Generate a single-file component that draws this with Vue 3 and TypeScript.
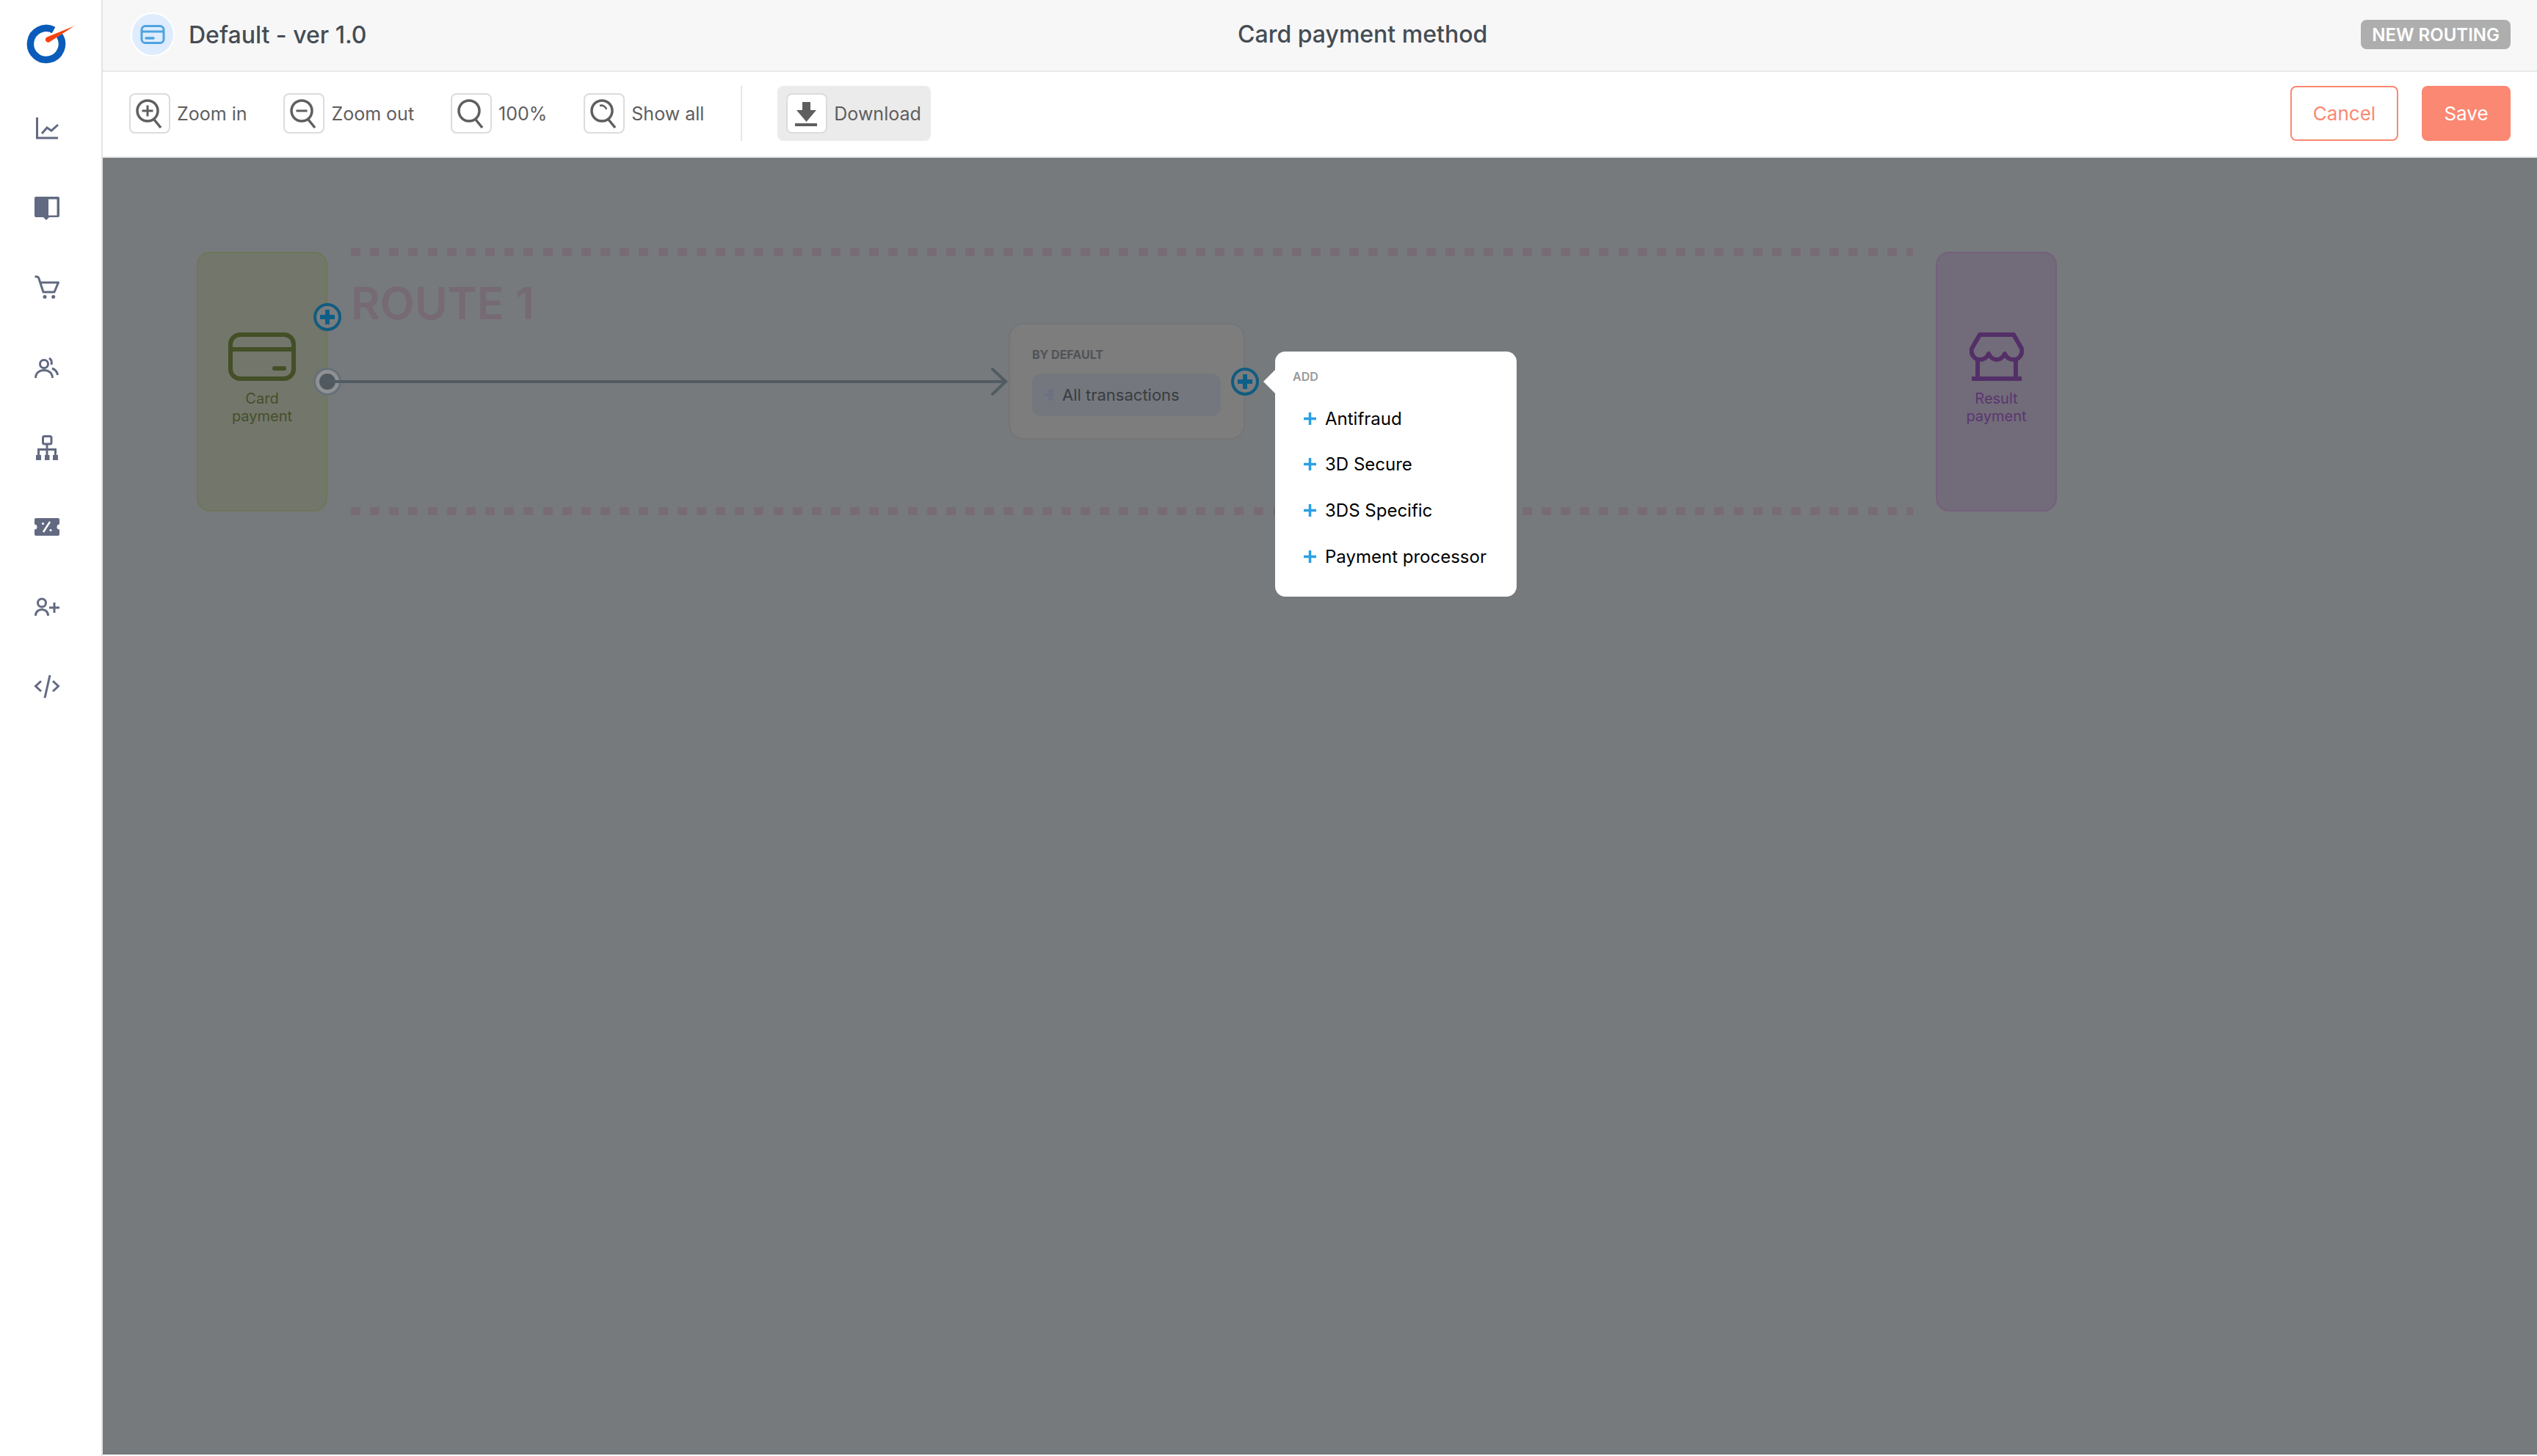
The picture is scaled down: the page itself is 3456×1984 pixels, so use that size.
<script setup lang="ts">
interface ToolItem {
  label: string;
  kind: "in" | "out" | "fit" | "all";
}

const tools: ToolItem[] = [
  { label: "Zoom in", kind: "in" },
  { label: "Zoom out", kind: "out" },
  { label: "100%", kind: "fit" },
  { label: "Show all", kind: "all" },
];

const addItems: string[] = ["Antifraud", "3D Secure", "3DS Specific", "Payment processor"];
</script>

<template>
  <div class="app">
    <aside class="sidebar">
      <div class="logo">
        <svg width="72" height="60" viewBox="0 0 72 60">
          <path d="M47 20.300 A21.500 21.500 0 1 1 39.100 13" fill="none" stroke="#0b5cba" stroke-width="9.500" />
          <path d="M67 7.500 L33 29.500 Q29 30.500 28 27 Q27.500 24 30 22.500 Z" fill="#f8420e" />
        </svg>
      </div>
      <nav class="nav">
        <div class="nav-row">
          <svg class="nav-icon" viewBox="0 0 36 36" fill="none" stroke="#626a82" stroke-width="3">
            <path d="M4.500 3 V31 H33" />
            <path d="M11 25 L18 17 L24 21 L33 13" />
          </svg>
        </div>
        <div class="nav-row">
          <svg class="nav-icon" viewBox="0 0 36 36">
            <rect x="1" y="2" width="34" height="28" rx="2" fill="#626a82" />
            <rect x="20" y="5.500" width="11.500" height="22" fill="#fff" />
            <path d="M13 30 L17 34 L21 30 Z" fill="#626a82" />
          </svg>
        </div>
        <div class="nav-row">
          <svg class="nav-icon" viewBox="0 0 36 36" fill="none" stroke="#626a82" stroke-width="3">
            <path d="M1.500 3 H4 Q6 3 6.800 5 L13 24 H28 L33.500 11 H8.500" stroke-linejoin="round" />
            <circle cx="15" cy="30.500" r="2.500" fill="#626a82" stroke="none" />
            <circle cx="26.700" cy="30.500" r="2.500" fill="#626a82" stroke="none" />
          </svg>
        </div>
        <div class="nav-row">
          <svg class="nav-icon" viewBox="0 0 36 36" fill="none" stroke="#626a82" stroke-width="3">
            <circle cx="14" cy="13" r="5.500" />
            <path d="M2.500 32 C2.500 25 8 21.500 14 21.500 C20 21.500 25.500 25 25.500 32" />
            <path d="M21 5 C24 7 25 10 24 14" />
            <path d="M25 19 C29 20.500 32 24 32.500 28" />
          </svg>
        </div>
        <div class="nav-row">
          <svg class="nav-icon" viewBox="0 0 36 36" fill="none" stroke="#626a82" stroke-width="3">
            <rect x="12.500" y="2.500" width="11.500" height="10.500" rx="2" />
            <path d="M18 13 V29 M6.500 29 V20.500 H29.500 V29" />
            <rect x="3" y="28" width="7" height="7" fill="#626a82" stroke="none" />
            <rect x="15" y="28" width="6.500" height="7" fill="#626a82" stroke="none" />
            <rect x="26" y="28" width="7" height="7" fill="#626a82" stroke="none" />
          </svg>
        </div>
        <div class="nav-row">
          <svg class="nav-icon" viewBox="0 0 36 36">
            <path d="M3 6 H33 Q35 6 35 8 V14.500 A3.500 3.500 0 0 0 35 21.500 V28 Q35 30 33 30 H3 Q1 30 1 28 V21.500 A3.500 3.500 0 0 0 1 14.500 V8 Q1 6 3 6 Z" fill="#626a82" />
            <path d="M13 25 L22 11" stroke="#fff" stroke-width="2.500" />
            <circle cx="12.500" cy="13.500" r="1.600" fill="#fff" />
            <circle cx="23" cy="22.500" r="1.600" fill="#fff" />
          </svg>
        </div>
        <div class="nav-row">
          <svg class="nav-icon" viewBox="0 0 36 36" fill="none" stroke="#626a82" stroke-width="3">
            <circle cx="11" cy="12.500" r="5.500" />
            <path d="M2.500 30 C2.500 24.500 6.500 21.500 11 21.500 C15.500 21.500 19.500 24.500 19.500 30" />
            <path d="M21 19 H35 M28 12 V26" />
          </svg>
        </div>
        <div class="nav-row">
          <svg class="nav-icon" viewBox="0 0 36 36" fill="none" stroke="#626a82" stroke-width="3">
            <path d="M10 11 L2.500 18 L10 25" />
            <path d="M26 11 L33.500 18 L26 25" />
            <path d="M22 3 L15 34" />
          </svg>
        </div>
      </nav>
    </aside>

    <main class="main">
      <header class="topbar">
        <div class="topbar-left">
          <span class="title-badge">
            <svg width="34" height="26" viewBox="0 0 34 26" fill="none" stroke="#4fa3e0" stroke-width="3">
              <rect x="2" y="1.500" width="30" height="23" rx="5" />
              <path d="M2 9 H32" />
              <path d="M8 18 H18" stroke-linecap="round" stroke-width="3.500" />
            </svg>
          </span>
          <span class="title">Default - ver 1.0</span>
        </div>
        <div class="topbar-center">Card payment method</div>
        <span class="tag">NEW ROUTING</span>
      </header>

      <div class="toolbar">
        <div v-for="tool in tools" :key="tool.kind" class="tool">
          <span class="tool-box">
            <svg width="56" height="55" viewBox="0 0 56 55" fill="none" stroke="#5f5f5f" stroke-width="3.500">
              <circle cx="25" cy="24" r="14" />
              <path d="M34 36 L43 47" />
              <path v-if="tool.kind === 'in'" d="M25 16.500 V31.500 M17.500 24 H32.500" stroke-width="3" />
              <path v-if="tool.kind === 'out'" d="M17.500 24 H32.500" stroke-width="3" />
              <path v-if="tool.kind === 'all'" d="M22 17 A7 7 0 0 1 31 22" stroke-width="2.500" />
            </svg>
          </span>
          <span class="tool-label">{{ tool.label }}</span>
        </div>
        <span class="divider" />
        <div class="tool tool-active">
          <span class="tool-box">
            <svg width="56" height="55" viewBox="0 0 56 55" fill="#5f5f5f">
              <path d="M22 12 H33 V23 H41 L27.500 39 L14 23 H22 Z" />
              <rect x="12" y="41" width="30" height="4" />
            </svg>
          </span>
          <span class="tool-label">Download</span>
        </div>
        <div class="actions">
          <button class="btn btn-outline" type="button">Cancel</button>
          <button class="btn btn-solid" type="button">Save</button>
        </div>
      </div>

      <section class="canvas">
        <div class="dots dots-top" />
        <div class="dots dots-bottom" />
        <div class="route-title">ROUTE 1</div>

        <div class="node node-start">
          <svg width="92" height="66" viewBox="0 0 92 66" fill="none" stroke="#434f27" stroke-width="6">
            <rect x="3" y="3" width="86" height="60" rx="13" />
            <path d="M3 23 H89" />
            <path d="M63 49 H76" stroke-linecap="round" />
          </svg>
          <span class="node-text">Card<br />payment</span>
        </div>

        <div class="node node-end">
          <svg width="74" height="66" viewBox="0 0 74 66" fill="none" stroke="#532f68" stroke-width="6">
            <path d="M14 3 H60 L71 22 C73 30 67 37 60 37 C54 37 50 34 48 29 C45 35 41 37 37 37 C33 37 29 35 26 29 C24 34 20 37 14 37 C7 37 1 30 3 22 Z" stroke-linejoin="round" />
            <path d="M11 37 V63 M63 37 V63" />
            <path d="M3 63 H71" />
          </svg>
          <span class="node-text">Result<br />payment</span>
        </div>

        <div class="filter-node">
          <div class="filter-label">BY DEFAULT</div>
          <div class="filter-pill">
            <svg width="16" height="16" viewBox="0 0 16 16" fill="none" stroke="#666c85" stroke-width="1">
              <circle cx="2.500" cy="8" r="1.500" />
              <rect x="9" y="1" width="3.500" height="3" />
              <rect x="9" y="6.500" width="3.500" height="3" />
              <rect x="9" y="12" width="3.500" height="3" />
              <path d="M4 8 H9 M7 2.500 V13.500 H9 M7 2.500 H9" />
            </svg>
            <span>All transactions</span>
          </div>
        </div>

        <span class="plus plus-start">
          <svg width="20" height="20" viewBox="0 0 20 20"><path d="M10 0 V20 M0 10 H20" stroke="#0d5f88" stroke-width="6" /></svg>
        </span>
        <span class="plus plus-filter">
          <svg width="20" height="20" viewBox="0 0 20 20"><path d="M10 0 V20 M0 10 H20" stroke="#0d5f88" stroke-width="6" /></svg>
        </span>
        <span class="port"><span class="port-dot" /></span>

        <div class="wire" />
        <svg class="wire-head" width="24" height="40" viewBox="0 0 24 40" fill="none" stroke="#515c62" stroke-width="4" stroke-linecap="round">
          <path d="M3 3 L21 20 L3 37" />
        </svg>

        <div class="add-menu">
          <div class="add-title">ADD</div>
          <div v-for="item in addItems" :key="item" class="add-item">
            <svg width="17" height="17" viewBox="0 0 17 17"><path d="M8.500 0 V17 M0 8.500 H17" stroke="#2b9fe3" stroke-width="3.500" /></svg>
            <span>{{ item }}</span>
          </div>
        </div>
      </section>
    </main>
  </div>
</template>

<style scoped>
.app {
  display: flex;
  width: 3456px;
  height: 1984px;
  background: #fff;
  font-family: Inter, "Liberation Sans", sans-serif;
  overflow: hidden;
}

.sidebar {
  flex: 0 0 140px;
  box-sizing: border-box;
  border-right: 2px solid #e4e4e4;
  background: #fff;
}

.logo {
  height: 121px;
  padding: 28px 0 0 34px;
  box-sizing: border-box;
}

.logo svg {
  display: block;
}

.nav-row {
  display: flex;
  align-items: center;
  height: 108.600px;
  padding-left: 46px;
}

.nav-icon {
  display: block;
  width: 36px;
  height: 36px;
}

.main {
  flex: 1;
  display: flex;
  flex-direction: column;
  min-width: 0;
  padding-bottom: 2px;
}

.topbar {
  position: relative;
  flex: 0 0 98px;
  box-sizing: border-box;
  display: flex;
  align-items: center;
  justify-content: space-between;
  padding: 0 36px 2px 38px;
  background: #f7f7f7;
  border-bottom: 2px solid #e8eaea;
}

.topbar-left {
  display: flex;
  align-items: center;
  gap: 19px;
}

.title-badge {
  display: flex;
  align-items: center;
  justify-content: center;
  width: 60px;
  height: 60px;
  box-sizing: border-box;
  border: 2px solid #fff;
  border-radius: 50%;
  background: #deecfd;
}

.title {
  font-size: 32px;
  font-weight: 500;
  color: #454c54;
}

.topbar-center {
  position: absolute;
  left: 1546px;
  top: 29px;
  font-size: 32px;
  line-height: 36px;
  font-weight: 500;
  color: #454c54;
}

.tag {
  display: flex;
  align-items: center;
  height: 40px;
  box-sizing: border-box;
  padding: 0 15px;
  border-radius: 8px;
  background: #aeaeae;
  color: #fff;
  font-size: 24px;
  font-weight: 600;
}

.toolbar {
  flex: 0 0 117px;
  box-sizing: border-box;
  display: flex;
  align-items: center;
  padding: 0 36px 2px 36px;
  background: #fff;
  border-bottom: 2px solid #e8eaea;
}

.tool {
  display: flex;
  align-items: center;
  gap: 9px;
  margin-right: 50px;
}

.tool-box {
  display: block;
  width: 56px;
  height: 55px;
  box-sizing: border-box;
  border: 2px solid #dcdcdc;
  border-radius: 8px;
  background: #fff;
}

.tool-box svg {
  display: block;
  margin: -2px;
}

.tool-label {
  padding-top: 1px;
  font-size: 25px;
  color: #5e5e5e;
}

.divider {
  width: 2px;
  height: 75px;
  margin-right: 48px;
  background: #e6e6e6;
}

.tool-active {
  height: 75px;
  box-sizing: border-box;
  padding: 0 13px 0 12px;
  border-radius: 8px;
  background: #ebebeb;
  margin-right: 0;
}

.actions {
  display: flex;
  gap: 32px;
  margin-left: auto;
}

.btn {
  height: 75px;
  box-sizing: border-box;
  border-radius: 8px;
  font-family: inherit;
  font-size: 26px;
}

.btn-outline {
  width: 147px;
  border: 2px solid #fa8872;
  background: #fff;
  color: #fa8872;
}

.btn-solid {
  width: 121px;
  border: 0;
  background: #fb8872;
  color: #fff;
}

.canvas {
  position: relative;
  flex: 1;
  background: #767a7d;
}

.dots {
  position: absolute;
  left: 338px;
  width: 2128px;
  height: 11px;
  background: repeating-linear-gradient(90deg, #776c75 0, #776c75 13px, transparent 13px, transparent 26.160px);
}

.dots-top {
  top: 123px;
}

.dots-bottom {
  top: 476px;
}

.route-title {
  position: absolute;
  left: 338px;
  top: 160px;
  font-size: 61px;
  line-height: 76px;
  font-weight: 600;
  color: #766a74;
}

.node {
  position: absolute;
  top: 128px;
  height: 354px;
  box-sizing: border-box;
  display: flex;
  flex-direction: column;
  align-items: center;
  padding-top: 108px;
  border-radius: 18px;
  border: 2px solid;
}

.node-start {
  left: 128px;
  width: 178px;
  background: #73766a;
  border-color: #6e7659;
  color: #444f2b;
}

.node-end {
  left: 2497px;
  width: 165px;
  background: #726b79;
  border-color: #75607c;
  color: #5a3670;
}

.node-text {
  margin-top: 12px;
  font-size: 20px;
  line-height: 24px;
  text-align: center;
}

.wire {
  position: absolute;
  left: 306px;
  top: 303px;
  width: 924px;
  height: 4px;
  background: #515c62;
}

.wire-head {
  position: absolute;
  left: 1209px;
  top: 285px;
}

.filter-node {
  position: absolute;
  left: 1234px;
  top: 225px;
  width: 322px;
  height: 159px;
  box-sizing: border-box;
  padding: 32px 31px 0 30px;
  background: #7d7d7e;
  border: 2px solid #747576;
  border-radius: 20px;
}

.filter-label {
  font-size: 16px;
  line-height: 18px;
  font-weight: 700;
  color: #505356;
}

.filter-pill {
  display: flex;
  align-items: center;
  gap: 9px;
  height: 58px;
  margin-top: 17px;
  padding-left: 16px;
  border-radius: 12px;
  background: #74777d;
  font-size: 22px;
  color: #393d41;
}

.plus {
  position: absolute;
  display: flex;
  align-items: center;
  justify-content: center;
  width: 38px;
  height: 38px;
  box-sizing: border-box;
  border: 4px solid #115c80;
  border-radius: 50%;
  background: #7a7d80;
}

.plus-start {
  left: 287px;
  top: 198px;
}

.plus-filter {
  left: 1537px;
  top: 286px;
}

.port {
  position: absolute;
  left: 287px;
  top: 286px;
  display: flex;
  align-items: center;
  justify-content: center;
  width: 38px;
  height: 38px;
  box-sizing: border-box;
  border: 3px solid #667079;
  border-radius: 50%;
  background: #909193;
}

.port-dot {
  width: 22px;
  height: 22px;
  border-radius: 50%;
  background: #50595f;
}

.add-menu {
  position: absolute;
  left: 1597px;
  top: 264px;
  width: 329px;
  height: 334px;
  box-sizing: border-box;
  padding: 25px 0 0 24px;
  background: #fff;
  border-radius: 14px;
}

.add-menu::before {
  content: "";
  position: absolute;
  left: -16px;
  top: 25px;
  border-style: solid;
  border-width: 16px 16px 16px 0;
  border-color: transparent #fff transparent transparent;
}

.add-title {
  font-size: 16px;
  line-height: 18px;
  font-weight: 600;
  color: #999;
  margin-bottom: 17px;
}

.add-item {
  display: flex;
  align-items: center;
  gap: 12px;
  height: 62.600px;
  padding-left: 15px;
  font-size: 24px;
  color: #000;
}
</style>

<style>
html,
body {
  margin: 0;
  background: #fff;
}
</style>
